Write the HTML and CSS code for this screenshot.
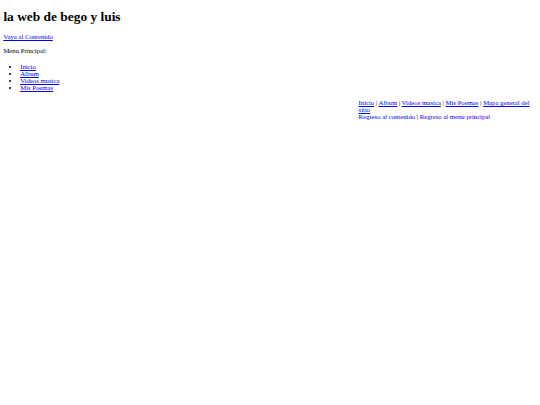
FILE: index.html
```html
<!DOCTYPE html>
<html lang="es">
<head>
<meta charset="utf-8">
<title>la web de bego y luis</title>
<link rel="stylesheet" href="styles.css">
</head>
<body>
<h1 class="site-title">la web de bego y luis</h1>
<p class="skip"><a href="#contenido">Vaya al Contenido</a></p>
<p class="menu-label">Menu Principal:</p>
<ul class="menu">
<li><a href="#">Inicio</a></li>
<li><a href="#">Album</a></li>
<li><a href="#">Videos musica</a></li>
<li><a href="#">Mis Poemas</a></li>
</ul>
<div class="footer-nav">
<a href="#">Inicio</a> | <a href="#">Album</a> | <a href="#">Videos musica</a> | <a href="#">Mis Poemas</a> | <a href="#">Mapa general del sitio</a><br>
<a href="#">Regreso al contenido</a> | <a href="#">Regreso al menu principal</a>
</div>
</body>
</html>
```
FILE: styles.css
```css
html { background: #fff; }
body {
  margin: 3.4px;
  font-family: "Liberation Serif", "Times New Roman", serif;
  font-size: 6.7px;
  color: #000;
}
a { color: #0000ee; }
.site-title {
  font-size: 13.4px;
  margin: 6px 0 8px;
}
.skip, .menu-label { margin: 6.7px 0; }
.menu {
  margin: 8.7px 0 6.7px;
  padding-left: 16.8px;
}
.footer-nav {
  width: 178px;
  margin-left: auto;
  margin-top: 8.7px;
}
```
